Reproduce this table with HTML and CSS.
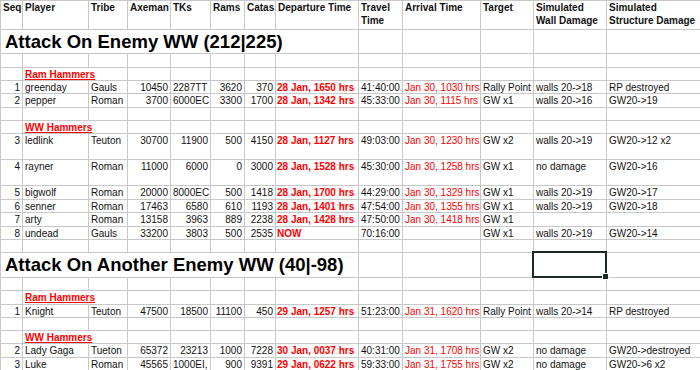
FILE: index.html
```html
<!DOCTYPE html>
<html>
<head>
<meta charset="utf-8">
<link rel="stylesheet" href="styles.css">
</head>
<body>
<div class="sheet">
  <!-- header -->
  <div class="c hd">Seq</div><div class="c hd">Player</div><div class="c hd">Tribe</div><div class="c hd">Axeman</div><div class="c hd">TKs</div><div class="c hd">Rams</div><div class="c hd">Catas</div><div class="c hd">Departure Time</div><div class="c hd">Travel<br>Time</div><div class="c hd">Arrival Time</div><div class="c hd">Target</div><div class="c hd">Simulated<br>Wall Damage</div><div class="c hd">Simulated<br>Structure Damage</div>

  <!-- title 1 -->
  <div class="c title">Attack On Enemy WW (212|225)</div><div class="c"></div><div class="c"></div><div class="c"></div><div class="c"></div><div class="c"></div>

  <!-- empty -->
  <div class="c"></div><div class="c"></div><div class="c"></div><div class="c"></div><div class="c"></div><div class="c"></div><div class="c"></div><div class="c"></div><div class="c"></div><div class="c"></div><div class="c"></div><div class="c"></div><div class="c"></div>

  <!-- Ram Hammers -->
  <div class="c"></div><div class="c lbl">Ram Hammers</div><div class="c"></div><div class="c"></div><div class="c"></div><div class="c"></div><div class="c"></div><div class="c"></div><div class="c"></div><div class="c"></div><div class="c"></div><div class="c"></div>

  <div class="c n">1</div><div class="c">greenday</div><div class="c">Gauls</div><div class="c n">10450</div><div class="c">2287TT</div><div class="c n">3620</div><div class="c n">370</div><div class="c dep">28 Jan, 1650 hrs</div><div class="c">41:40:00</div><div class="c arr">Jan 30, 1030 hrs</div><div class="c">Rally Point</div><div class="c">walls 20-&gt;18</div><div class="c">RP destroyed</div>

  <div class="c n">2</div><div class="c">pepper</div><div class="c">Roman</div><div class="c n">3700</div><div class="c">6000EC</div><div class="c n">3300</div><div class="c n">1700</div><div class="c dep">28 Jan, 1342 hrs</div><div class="c">45:33:00</div><div class="c arr">Jan 30, 1115 hrs</div><div class="c">GW x1</div><div class="c">walls 20-&gt;16</div><div class="c">GW20-&gt;19</div>

  <div class="c"></div><div class="c"></div><div class="c"></div><div class="c"></div><div class="c"></div><div class="c"></div><div class="c"></div><div class="c"></div><div class="c"></div><div class="c"></div><div class="c"></div><div class="c"></div><div class="c"></div>

  <!-- WW Hammers -->
  <div class="c"></div><div class="c lbl">WW Hammers</div><div class="c"></div><div class="c"></div><div class="c"></div><div class="c"></div><div class="c"></div><div class="c"></div><div class="c"></div><div class="c"></div><div class="c"></div><div class="c"></div>

  <div class="c n">3</div><div class="c">ledlink</div><div class="c">Teuton</div><div class="c n">30700</div><div class="c n">11900</div><div class="c n">500</div><div class="c n">4150</div><div class="c dep">28 Jan, 1127 hrs</div><div class="c">49:03:00</div><div class="c arr">Jan 30, 1230 hrs</div><div class="c">GW x2</div><div class="c">walls 20-&gt;19</div><div class="c">GW20-&gt;12 x2</div>

  <div class="c n">4</div><div class="c">rayner</div><div class="c">Roman</div><div class="c n">11000</div><div class="c n">6000</div><div class="c n">0</div><div class="c n">3000</div><div class="c dep">28 Jan, 1528 hrs</div><div class="c">45:30:00</div><div class="c arr">Jan 30, 1258 hrs</div><div class="c">GW x1</div><div class="c">no damage</div><div class="c">GW20-&gt;16</div>

  <div class="c n">5</div><div class="c">bigwolf</div><div class="c">Roman</div><div class="c n">20000</div><div class="c">8000EC</div><div class="c n">500</div><div class="c n">1418</div><div class="c dep">28 Jan, 1700 hrs</div><div class="c">44:29:00</div><div class="c arr">Jan 30, 1329 hrs</div><div class="c">GW x1</div><div class="c">walls 20-&gt;19</div><div class="c">GW20-&gt;17</div>

  <div class="c n">6</div><div class="c">senner</div><div class="c">Roman</div><div class="c n">17463</div><div class="c n">6580</div><div class="c n">610</div><div class="c n">1193</div><div class="c dep">28 Jan, 1401 hrs</div><div class="c">47:54:00</div><div class="c arr">Jan 30, 1355 hrs</div><div class="c">GW x1</div><div class="c">walls 20-&gt;19</div><div class="c">GW20-&gt;18</div>

  <div class="c n">7</div><div class="c">arty</div><div class="c">Roman</div><div class="c n">13158</div><div class="c n">3963</div><div class="c n">889</div><div class="c n">2238</div><div class="c dep">28 Jan, 1428 hrs</div><div class="c">47:50:00</div><div class="c arr">Jan 30, 1418 hrs</div><div class="c">GW x1</div><div class="c"></div><div class="c"></div>

  <div class="c n">8</div><div class="c">undead</div><div class="c">Gauls</div><div class="c n">33200</div><div class="c n">3803</div><div class="c n">500</div><div class="c n">2535</div><div class="c dep">NOW</div><div class="c">70:16:00</div><div class="c"></div><div class="c">GW x1</div><div class="c">walls 20-&gt;19</div><div class="c">GW20-&gt;14</div>

  <div class="c"></div><div class="c"></div><div class="c"></div><div class="c"></div><div class="c"></div><div class="c"></div><div class="c"></div><div class="c"></div><div class="c"></div><div class="c"></div><div class="c"></div><div class="c"></div><div class="c"></div>

  <!-- title 2 -->
  <div class="c title">Attack On Another Enemy WW (40|-98)</div><div class="c"></div><div class="c"></div><div class="c"></div><div class="c sel"></div><div class="c"></div>

  <div class="c"></div><div class="c"></div><div class="c"></div><div class="c"></div><div class="c"></div><div class="c"></div><div class="c"></div><div class="c"></div><div class="c"></div><div class="c"></div><div class="c"></div><div class="c"></div><div class="c"></div>

  <div class="c"></div><div class="c lbl">Ram Hammers</div><div class="c"></div><div class="c"></div><div class="c"></div><div class="c"></div><div class="c"></div><div class="c"></div><div class="c"></div><div class="c"></div><div class="c"></div><div class="c"></div>

  <div class="c n">1</div><div class="c">Knight</div><div class="c">Teuton</div><div class="c n">47500</div><div class="c n">18500</div><div class="c n">11100</div><div class="c n">450</div><div class="c dep">29 Jan, 1257 hrs</div><div class="c">51:23:00</div><div class="c arr">Jan 31, 1620 hrs</div><div class="c">Rally Point</div><div class="c">walls 20-&gt;14</div><div class="c">RP destroyed</div>

  <div class="c"></div><div class="c"></div><div class="c"></div><div class="c"></div><div class="c"></div><div class="c"></div><div class="c"></div><div class="c"></div><div class="c"></div><div class="c"></div><div class="c"></div><div class="c"></div><div class="c"></div>

  <div class="c"></div><div class="c lbl">WW Hammers</div><div class="c"></div><div class="c"></div><div class="c"></div><div class="c"></div><div class="c"></div><div class="c"></div><div class="c"></div><div class="c"></div><div class="c"></div><div class="c"></div>

  <div class="c n">2</div><div class="c">Lady Gaga</div><div class="c">Tueton</div><div class="c n">65372</div><div class="c n">23213</div><div class="c n">1000</div><div class="c n">7228</div><div class="c dep">30 Jan, 0037 hrs</div><div class="c">40:31:00</div><div class="c arr">Jan 31, 1708 hrs</div><div class="c">GW x2</div><div class="c">no damage</div><div class="c">GW20-&gt;destroyed</div>

  <div class="c n">3</div><div class="c">Luke</div><div class="c">Roman</div><div class="c n">45565</div><div class="c">1000EI, 1000TT</div><div class="c n">900</div><div class="c n">9391</div><div class="c dep">29 Jan, 0622 hrs</div><div class="c">59:33:00</div><div class="c arr">Jan 31, 1755 hrs</div><div class="c">GW x2</div><div class="c">no damage</div><div class="c">GW20-&gt;6 x2</div>
</div>
</body>
</html>
```

FILE: styles.css
```css
html, body {
  margin: 0;
  padding: 0;
  background: #ffffff;
  overflow: hidden;
}

.sheet {
  display: grid;
  grid-template-columns: 22px 66px 39px 43px 40px 34px 31px 83px 44px 78px 53px 73px 94px;
  grid-template-rows: 29px 24px 14px 13px 13px 14px 13px 13px 26px 26px 14px 13px 14px 13px 13px 25px 13px 14px 13px 13px 13px 14px 13px;
  border-top: 1px solid #c8c8c8;
  border-left: 1px solid #c8c8c8;
  width: max-content;
  font-family: "Liberation Sans", Arial, sans-serif;
  font-size: 10px;
  line-height: 13px;
  color: #111;
}

.c {
  box-sizing: border-box;
  border-right: 1px solid #c8c8c8;
  border-bottom: 1px solid #c8c8c8;
  padding: 0 2px;
  white-space: nowrap;
  overflow: hidden;
  min-width: 0;
}

.hd {
  font-weight: bold;
  white-space: nowrap;
  padding-left: 2px;
}

.n {
  text-align: right;
}

.dep {
  color: #ff0000;
  font-weight: bold;
  padding-left: 1px;
  overflow: visible;
}

.arr {
  color: #ff0000;
}

.lbl {
  grid-column: span 2;
  color: #ff0000;
  font-weight: bold;
  text-decoration: underline;
}

.title {
  grid-column: span 8;
  font-size: 18.5px;
  font-weight: bold;
  line-height: 24px;
  padding-left: 4px;
  color: #000;
}

.sel {
  position: relative;
  overflow: visible;
}

.sel::after {
  content: "";
  position: absolute;
  left: -2px;
  top: -2px;
  right: -1px;
  bottom: -1px;
  border: 2px solid #1e2828;
}

.sel::before {
  content: "";
  position: absolute;
  right: -3px;
  bottom: -3px;
  width: 5px;
  height: 5px;
  background: #1e2828;
  border: 1px solid #ffffff;
  z-index: 2;
}
```
